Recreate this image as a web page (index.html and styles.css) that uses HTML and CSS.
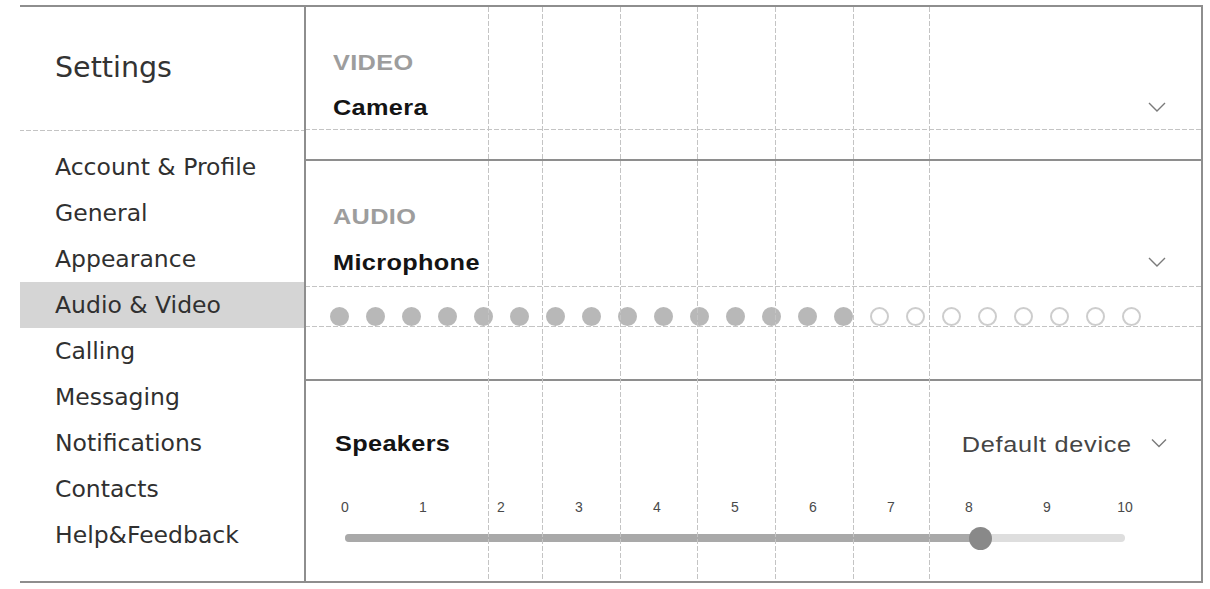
FILE: index.html
```html
<!DOCTYPE html>
<html lang="en">
<head>
<meta charset="utf-8">
<title>Settings</title>
<link rel="stylesheet" href="styles.css">
</head>
<body>
<div class="frame">
  <aside class="sidebar">
    <div class="sidebar-head"><h1 class="title">Settings</h1></div>
    <ul class="nav">
      <li class="nav-item">Account &amp; Profile</li>
      <li class="nav-item">General</li>
      <li class="nav-item">Appearance</li>
      <li class="nav-item is-active">Audio &amp; Video</li>
      <li class="nav-item">Calling</li>
      <li class="nav-item">Messaging</li>
      <li class="nav-item">Notifications</li>
      <li class="nav-item">Contacts</li>
      <li class="nav-item">Help&amp;Feedback</li>
    </ul>
  </aside>
  <main class="main">
    <section class="section section-video">
      <div class="label"><span class="wide">VIDEO</span></div>
      <div class="select-row">
        <span class="select-name wide">Camera</span>
        <svg class="chev" width="18" height="10" viewBox="0 0 18 10"><path d="M1 1 L9 9 L17 1" fill="none" stroke="#7a7a7a" stroke-width="1.4"/></svg>
      </div>
    </section>
    <section class="section section-audio">
      <div class="label"><span class="wide">AUDIO</span></div>
      <div class="select-row select-row-mic">
        <span class="select-name wide">Microphone</span>
        <svg class="chev" width="18" height="10" viewBox="0 0 18 10"><path d="M1 1 L9 9 L17 1" fill="none" stroke="#7a7a7a" stroke-width="1.4"/></svg>
      </div>
      <div class="meter">
        <span class="dot on"></span><span class="dot on"></span><span class="dot on"></span><span class="dot on"></span><span class="dot on"></span>
        <span class="dot on"></span><span class="dot on"></span><span class="dot on"></span><span class="dot on"></span><span class="dot on"></span>
        <span class="dot on"></span><span class="dot on"></span><span class="dot on"></span><span class="dot on"></span><span class="dot on"></span>
        <span class="dot"></span><span class="dot"></span><span class="dot"></span><span class="dot"></span>
        <span class="dot"></span><span class="dot"></span><span class="dot"></span><span class="dot"></span>
      </div>
    </section>
    <section class="section section-speakers">
      <div class="speaker-row">
        <span class="select-name wide">Speakers</span>
        <span class="device">
          <span class="device-name">Default device</span>
          <svg class="chev chev-small" width="16" height="10" viewBox="0 0 16 10"><path d="M1 1.5 L8 8.5 L15 1.5" fill="none" stroke="#7a7a7a" stroke-width="1.4"/></svg>
        </span>
      </div>
      <div class="scale">
        <span class="tick">0</span><span class="tick">1</span><span class="tick">2</span><span class="tick">3</span><span class="tick">4</span><span class="tick">5</span><span class="tick">6</span><span class="tick">7</span><span class="tick">8</span><span class="tick">9</span><span class="tick">10</span>
      </div>
      <div class="track">
        <div class="track-fill" style="width:81.5%"><span class="thumb"></span></div>
      </div>
    </section>
    <div class="grid-overlay" aria-hidden="true">
      <span></span><span class="gl"></span><span class="gl"></span><span class="gl"></span><span class="gl"></span><span class="gl"></span><span class="gl"></span><span class="gl"></span>
    </div>
  </main>
</div>
</body>
</html>
```
FILE: styles.css
```css
* { box-sizing: border-box; }
html, body { margin: 0; padding: 0; background: #fff; }
body { width: 1210px; height: 589px; overflow: hidden; }

.frame {
  margin: 5px 0 0 20px;
  width: 1183px;
  height: 578px;
  border-top: 2px solid #8e8e8e;
  border-right: 2px solid #8e8e8e;
  border-bottom: 2px solid #8e8e8e;
  display: flex;
}

.dashed-bottom {
  border-bottom: 1px solid #c4c4c4;
}

/* Sidebar */
.sidebar {
  width: 286px;
  border-right: 2px solid #8e8e8e;
  font-family: "DejaVu Sans", Verdana, sans-serif;
  color: #303030;
}
.sidebar-head {
  height: 124px;
  border-bottom: 1px solid #c4c4c4;
  border-image: repeating-linear-gradient(90deg, #c4c4c4 0 5px, transparent 5px 7px) 1;
  display: flex;
  align-items: center;
  padding: 0 0 3px 35px;
}
.title {
  margin: 0;
  font-weight: normal;
  font-size: 28.5px;
  color: #333;
}
.nav {
  list-style: none;
  margin: 0;
  padding: 13px 0 0 0;
}
.nav-item {
  height: 46px;
  line-height: 46px;
  padding-left: 35px;
  font-size: 23.5px;
  white-space: nowrap;
}
.nav-item.is-active { background: #d5d5d5; }

/* Main */
.main {
  flex: 1;
  position: relative;
  font-family: "Liberation Sans", Arial, sans-serif;
  display: flex;
  flex-direction: column;
}
.section { border-bottom: 2px solid #8e8e8e; }
.section-video { padding: 43px 0 29px 0; }
.section-audio { padding: 43px 0 52px 0; }
.section-speakers { border-bottom: none; flex: 1; padding-top: 50px; }

.wide {
  display: inline-block;
  transform: scaleX(1.15);
  transform-origin: left center;
  letter-spacing: 0.3px;
}

.label {
  height: 25px;
  line-height: 25px;
  padding-left: 27px;
  font-weight: bold;
  font-size: 22px;
  color: #9d9d9d;
}
.select-row {
  margin-top: 11px;
  height: 44px;
  border-bottom: 1px solid #c4c4c4;
  border-image: repeating-linear-gradient(90deg, #c4c4c4 0 5px, transparent 5px 7px) 1;
  display: flex;
  align-items: center;
  justify-content: space-between;
  padding: 0 35px 1px 27px;
}
.select-row-mic { margin-top: 10px; height: 48px; }
.select-name {
  font-weight: bold;
  font-size: 22px;
  color: #141414;
  line-height: 25px;
}
.chev { display: block; }

.meter {
  height: 40px;
  border-bottom: 1px solid #c4c4c4;
  border-image: repeating-linear-gradient(90deg, #c4c4c4 0 5px, transparent 5px 7px) 1;
  display: flex;
  align-items: flex-end;
  gap: 17px;
  padding-left: 24px;
}
.dot {
  width: 19px;
  height: 19px;
  border-radius: 50%;
  border: 2px solid #cdcdcd;
  background: #fff;
  flex: none;
}
.dot.on { background: #b8b8b8; border-color: #b8b8b8; }

.speaker-row {
  display: flex;
  align-items: center;
  justify-content: space-between;
  height: 25px;
  padding: 0 34px 0 29px;
}
.device {
  display: flex;
  align-items: center;
  gap: 19px;
  margin-top: 3px;
}
.device-name {
  display: inline-block;
  font-size: 22px;
  letter-spacing: 0.6px;
  color: #454545;
  transform: scaleX(1.15);
  transform-origin: right center;
}
.chev-small { margin-top: -4px; }

.scale {
  margin: 43px 0 0 32px;
  width: 794px;
  height: 16px;
  display: flex;
  justify-content: space-between;
  font-size: 14px;
  line-height: 16px;
  color: #4a4a4a;
}
.tick { width: 14px; white-space: nowrap; display: flex; justify-content: center; }

.track {
  margin: 19px 0 0 39px;
  width: 780px;
  height: 8px;
  border-radius: 4px;
  background: #dedede;
}
.track-fill {
  position: relative;
  height: 8px;
  border-radius: 4px;
  background: #a9a9a9;
}
.thumb {
  position: absolute;
  right: -11px;
  top: -7.5px;
  width: 23px;
  height: 23px;
  border-radius: 50%;
  background: #898989;
}

/* dashed guide columns lying over the panel */
.grid-overlay {
  position: absolute;
  inset: 0;
  display: grid;
  grid-template-columns: 182px 54px 78px 77px 78px 78px 76px 1fr;
  pointer-events: none;
}
.grid-overlay .gl {
  background: repeating-linear-gradient(180deg, #c4c4c4 0 5px, transparent 5px 7px) left top / 1px 100% no-repeat;
}
```
